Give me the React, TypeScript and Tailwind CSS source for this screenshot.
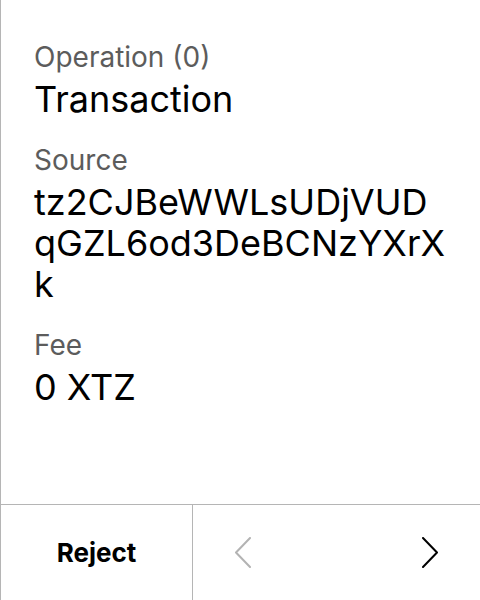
import { ReactNode } from "react";

type FieldProps = {
  label: string;
  children: ReactNode;
};

function Field({ label, children }: FieldProps) {
  return (
    <div className="flex flex-col gap-[5px]">
      <span className="text-[28px] leading-[34px] text-[#5c5c5c]">{label}</span>
      <span className="break-all text-[36px] leading-[41px] text-black">
        {children}
      </span>
    </div>
  );
}

function Chevron({ dir, muted }: { dir: "left" | "right"; muted?: boolean }) {
  const points = dir === "left" ? "15,1 1,15.5 15,30" : "1,1 15,15.5 1,30";
  return (
    <svg width="16" height="31" viewBox="0 0 16 31" fill="none">
      <polyline
        points={points}
        stroke={muted ? "#b3b3b3" : "#000"}
        strokeWidth="2"
        strokeLinecap="round"
        strokeLinejoin="round"
      />
    </svg>
  );
}

export default function App() {
  return (
    <div
      className="flex h-[600px] w-[480px] flex-col border-l border-[#b5b5b5] bg-white"
      style={{ fontFamily: "Inter, 'Noto Sans', sans-serif" }}
    >
      <div className="flex flex-1 flex-col gap-[23px] pl-[33px] pr-[34px] pt-[40px]">
        <Field label="Operation (0)">Transaction</Field>
        <Field label="Source">tz2CJBeWWLsUDjVUDqGZL6od3DeBCNzYXrXk</Field>
        <Field label="Fee">0 XTZ</Field>
      </div>
      <div className="flex h-[96px] border-t border-[#b5b5b5]">
        <button className="flex w-[192px] items-center justify-center border-r border-[#b5b5b5] text-[26px] font-bold text-black">
          Reject
        </button>
        <div className="flex flex-1 items-center justify-between">
          <button className="flex w-[100px] items-center justify-center">
            <Chevron dir="left" muted />
          </button>
          <button className="flex w-[100px] items-center justify-center">
            <Chevron dir="right" />
          </button>
        </div>
      </div>
    </div>
  );
}
